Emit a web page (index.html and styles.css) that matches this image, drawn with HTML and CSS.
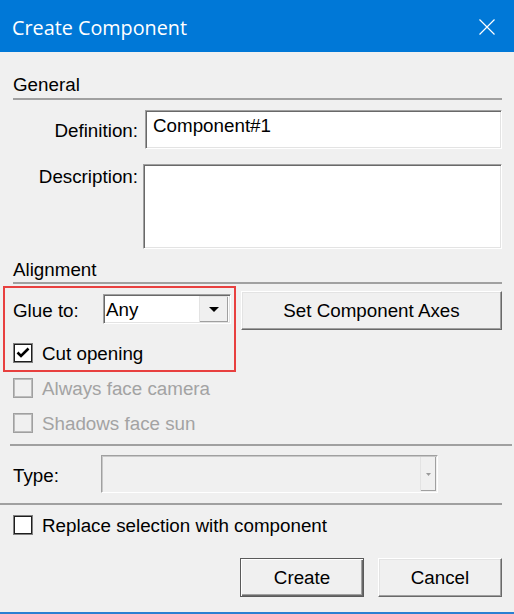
FILE: index.html
```html
<!DOCTYPE html>
<html>
<head>
<meta charset="utf-8">
<title>Create Component</title>
<link rel="stylesheet" href="styles.css">
</head>
<body>
<div class="window">
  <div class="titlebar">
    <span class="title">Create Component</span>
    <svg class="close" width="16" height="16" viewBox="0 0 16 16"><path d="M0.5 0.5 L15.5 15.5 M15.5 0.5 L0.5 15.5" stroke="#fff" stroke-width="1.2" fill="none"/></svg>
  </div>
  <div class="content">
    <div class="section-title">General</div>
    <div class="sep sep-general"></div>
    <div class="form-grid">
      <div class="label label-def">Definition:</div>
      <div class="textbox textbox-def">Component#1</div>
      <div class="label label-desc">Description:</div>
      <div class="textbox textbox-desc"></div>
    </div>
    <div class="section-title section-align">Alignment</div>
    <div class="sep sep-align"></div>
    <div class="glue-row">
      <div class="glue-label">Glue to:</div>
      <div class="select">
        <span class="select-text">Any</span>
        <span class="select-btn"><svg width="10" height="5" viewBox="0 0 10 5"><path d="M0 0 H10 L5 5 Z" fill="#000"/></svg></span>
      </div>
      <div class="btn btn-axes">Set Component Axes</div>
    </div>
    <div class="check-row row-cut">
      <span class="box"><svg width="18" height="18" viewBox="0 0 18 18"><path d="M3.5 8.5 L7 12 L14.5 4.5" stroke="#000" stroke-width="2.6" fill="none"/></svg></span>
      <span class="check-label">Cut opening</span>
    </div>
    <div class="check-row disabled row-next">
      <span class="box"></span>
      <span class="check-label">Always face camera</span>
    </div>
    <div class="check-row disabled row-next">
      <span class="box"></span>
      <span class="check-label">Shadows face sun</span>
    </div>
    <div class="sep sep-wide"></div>
    <div class="type-row">
      <div class="type-label">Type:</div>
      <div class="combo">
        <span class="combo-btn"><svg width="5" height="3" viewBox="0 0 5 3"><path d="M0 0 H5 L2.5 3 Z" fill="#9a9a9a"/></svg></span>
      </div>
    </div>
    <div class="sep sep-left"></div>
    <div class="check-row row-replace">
      <span class="box"></span>
      <span class="check-label">Replace selection with component</span>
    </div>
    <div class="buttons">
      <div class="btn btn-default">Create</div>
      <div class="btn btn-cancel">Cancel</div>
    </div>
  </div>
  <div class="highlight"></div>
</div>
</body>
</html>
```
FILE: styles.css
```css
html, body {
  margin: 0;
  padding: 0;
}
body {
  width: 514px;
  height: 614px;
  overflow: hidden;
  background: #f0f0f0;
  font-family: "Liberation Sans", Arial, sans-serif;
  font-size: 18.8px;
  line-height: 21px;
  color: #000;
}
.window {
  position: relative;
  height: 614px;
  box-sizing: border-box;
  border-bottom: 2px solid #2a80d2;
  display: flex;
  flex-direction: column;
}
.titlebar {
  height: 52px;
  box-sizing: border-box;
  padding: 14px 19px 0 12px;
  background: #0078d7;
  color: #fff;
  display: flex;
  align-items: flex-start;
  font-family: "Open Sans", "Noto Sans", sans-serif;
  font-size: 19.8px;
  line-height: 27px;
}
.close {
  margin-left: auto;
  margin-top: 5px;
}
.content {
  padding: 0 12px 0 13px;
  display: flex;
  flex-direction: column;
}
.section-title {
  margin-top: 22px;
}
.section-align {
  margin-top: 10px;
}
.sep {
  height: 2px;
  background: #a0a0a0;
}
.sep-general {
  margin-top: 3px;
}
.sep-align {
  margin-top: 2px;
}
.sep-wide {
  margin: 10px -10px 0 -3px;
}
.sep-left {
  margin: 10px 0 0 -13px;
}
.form-grid {
  margin-top: 10px;
  display: grid;
  grid-template-columns: 125px 1fr;
  row-gap: 15px;
}
.label {
  text-align: right;
}
.label-def {
  margin-top: 10px;
}
.label-desc {
  margin-top: 2px;
}
.textbox {
  background: #fff;
  box-sizing: border-box;
  border: 1px solid;
  border-color: #a0a0a0 #fff #fff #a0a0a0;
  box-shadow: inset 1px 1px #696969, inset -1px -1px #e3e3e3;
}
.textbox-def {
  margin-left: 7px;
  height: 39px;
  padding: 4px 7px 0 7px;
}
.textbox-desc {
  margin-left: 5px;
  height: 85px;
}
.glue-row {
  margin-top: 7px;
  display: flex;
  align-items: flex-start;
}
.glue-label {
  width: 90px;
  margin-top: 9px;
}
.select {
  width: 128px;
  height: 30px;
  margin-top: 3px;
  box-sizing: border-box;
  background: #fff;
  border: 1px solid;
  border-color: #a0a0a0 #fff #fff #a0a0a0;
  box-shadow: inset 1px 1px #696969, inset -1px -1px #e3e3e3;
  padding: 1px 2px 1px 1px;
  display: flex;
}
.select-text {
  flex: 1;
  padding: 3px 0 0 1px;
}
.select-btn {
  width: 29px;
  background: #f0f0f0;
  box-shadow: inset 1px 1px #e3e3e3, inset -1px -1px #a0a0a0;
  display: flex;
  align-items: center;
  justify-content: center;
}
.btn {
  box-sizing: border-box;
  height: 39px;
  background: #f0f0f0;
  border: 1px solid;
  border-color: #fff #696969 #696969 #fff;
  box-shadow: inset -1px -1px #a0a0a0, inset 1px 1px #e3e3e3;
  display: flex;
  align-items: center;
  justify-content: center;
}
.btn-axes {
  flex: 1;
  margin-left: 10px;
}
.check-row {
  display: flex;
  align-items: flex-start;
}
.row-cut {
  margin-top: 13px;
}
.row-next {
  margin-top: 14px;
}
.row-replace {
  margin-top: 10px;
}
.box {
  width: 20px;
  height: 20px;
  box-sizing: border-box;
  background: #fff;
  border: 1px solid #808080;
  box-shadow: inset 0 0 0 1px #1e1e1e;
  display: flex;
  align-items: center;
  justify-content: center;
}
.check-label {
  margin-left: 9px;
}
.disabled .box {
  background: #f0f0f0;
  border-color: #a0a0a0;
  box-shadow: inset 0 0 0 1px #bcbcbc;
}
.disabled .check-label {
  color: #a3a3a3;
}
.type-row {
  margin-top: 9px;
  display: flex;
  align-items: flex-start;
}
.type-label {
  width: 88px;
  margin-top: 10px;
}
.combo {
  width: 337px;
  height: 38px;
  box-sizing: border-box;
  border: 1px solid;
  border-color: #a0a0a0 #fff #fff #a0a0a0;
  box-shadow: inset 1px 1px #c8c8c8;
  padding: 1px;
  display: flex;
  justify-content: flex-end;
}
.combo-btn {
  width: 16px;
  box-sizing: border-box;
  border-left: 1px solid #e3e3e3;
  box-shadow: inset -1px -1px #a0a0a0;
  display: flex;
  align-items: center;
  justify-content: center;
}
.buttons {
  margin-top: 22px;
  display: flex;
  justify-content: flex-end;
  gap: 14px;
}
.buttons .btn {
  width: 124px;
}
.btn-default {
  border-color: #5a5a5a;
  box-shadow: inset 1px 1px #fff, inset -1px -1px #696969, inset -2px -2px #a0a0a0;
}
.highlight {
  position: absolute;
  left: 3px;
  top: 286px;
  width: 233px;
  height: 86px;
  box-sizing: border-box;
  border: 2px solid #e8403f;
}
```
